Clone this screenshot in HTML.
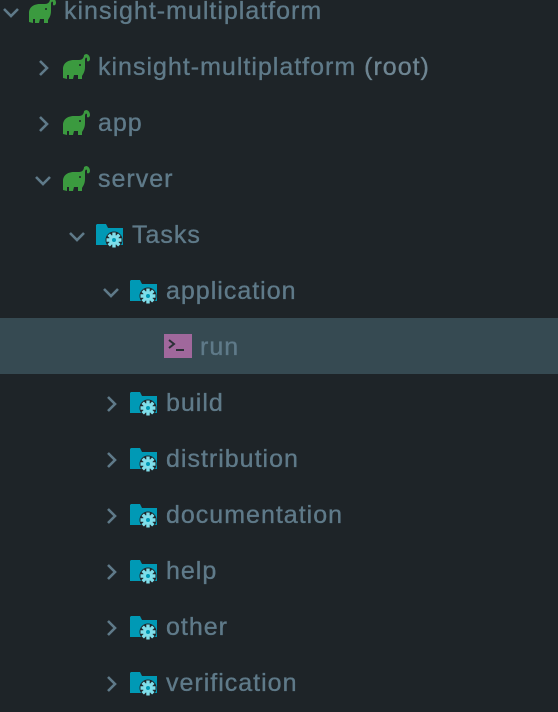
<!DOCTYPE html>
<html><head><style>
body{margin:0;width:558px;height:690px;background:#1e2428;overflow:hidden;position:relative;font-family:"Liberation Sans",sans-serif;}
.r{position:absolute;left:0;width:558px;height:56px;}
.sel{background:#364a52;}
.t{position:absolute;top:13px;font-size:25px;line-height:28px;color:#5f7a89;white-space:nowrap;letter-spacing:1px;-webkit-text-stroke:0.35px #5f7a89}
.t span{color:#6e8592;-webkit-text-stroke:0.35px #6e8592}
svg{position:absolute;overflow:visible}
</style></head><body>
<svg width="0" height="0" style="position:absolute">
<defs>
<g id="chd"><path d="M1 5 L8 12 L15 5" fill="none" stroke="#5f7a89" stroke-width="2.6"/></g>
<g id="chr"><path d="M4 1 L11 8 L4 15" fill="none" stroke="#5f7a89" stroke-width="2.6"/></g>
<g id="ele"><path d="M1 24 L1 15 C1 9 6 6 12 6 L17 6 C20 6 22 4 22 1 L24 0 C26 0 28 2 28 5 C28 7 26 8 25 7 L25 4 C24 3 23 4 23 6 L23 13 C23 18 21 20 20 22 L20 25 L16 25 L16 21 L12 21 L11 25 L7 25 L7 21 L5 21 L5 25 Z" fill="#3b9a3f"/><circle cx="18" cy="11" r="1" fill="#1e2428"/></g>
<g id="fol"><path d="M0 2 L0 22 L27 22 L27 5 L12 5 L10 1 L1 1 Z" fill="#0099b5"/><circle cx="18" cy="17" r="8.5" fill="#1e2428"/><g stroke="#7fdeea" stroke-width="3.4"><path d="M18 9.5 V24.5 M10.5 17 H25.5 M12.7 11.7 L23.3 22.3 M23.3 11.7 L12.7 22.3"/></g><circle cx="18" cy="17" r="5" fill="#7fdeea"/><circle cx="18" cy="17" r="2" fill="#0099b5"/></g>
</defs></svg>

<div class="r" style="top:-16px"><svg style="left:3px;top:20px" width="16" height="16"><use href="#chd"/></svg><svg style="left:28px;top:14px" width="30" height="26"><use href="#ele"/></svg><div class="t" style="left:64px">kinsight-multiplatform</div></div>
<div class="r" style="top:40px"><svg style="left:36px;top:20px" width="16" height="16"><use href="#chr"/></svg><svg style="left:62px;top:14px" width="30" height="26"><use href="#ele"/></svg><div class="t" style="left:98px">kinsight-multiplatform <span>(root)</span></div></div>
<div class="r" style="top:96px"><svg style="left:36px;top:20px" width="16" height="16"><use href="#chr"/></svg><svg style="left:62px;top:14px" width="30" height="26"><use href="#ele"/></svg><div class="t" style="left:98px">app</div></div>
<div class="r" style="top:152px"><svg style="left:35px;top:20px" width="16" height="16"><use href="#chd"/></svg><svg style="left:62px;top:14px" width="30" height="26"><use href="#ele"/></svg><div class="t" style="left:98px">server</div></div>
<div class="r" style="top:208px"><svg style="left:69px;top:20px" width="16" height="16"><use href="#chd"/></svg><svg style="left:96px;top:15px" width="28" height="28"><use href="#fol"/></svg><div class="t" style="left:132px">Tasks</div></div>
<div class="r" style="top:264px"><svg style="left:103px;top:20px" width="16" height="16"><use href="#chd"/></svg><svg style="left:130px;top:15px" width="28" height="28"><use href="#fol"/></svg><div class="t" style="left:166px">application</div></div>
<div class="r sel" style="top:318px"><svg style="left:164px;top:16px" width="28" height="24"><rect x="0" y="0" width="28" height="24" fill="#a0689c"/><path d="M5 6 L10 10 L5 14" fill="none" stroke="#2a3036" stroke-width="2"/><path d="M12 16 H20" stroke="#2a3036" stroke-width="2"/></svg><div class="t" style="left:200px;top:15px">run</div></div>
<div class="r" style="top:376px"><svg style="left:104px;top:20px" width="16" height="16"><use href="#chr"/></svg><svg style="left:130px;top:15px" width="28" height="28"><use href="#fol"/></svg><div class="t" style="left:166px">build</div></div>
<div class="r" style="top:432px"><svg style="left:104px;top:20px" width="16" height="16"><use href="#chr"/></svg><svg style="left:130px;top:15px" width="28" height="28"><use href="#fol"/></svg><div class="t" style="left:166px">distribution</div></div>
<div class="r" style="top:488px"><svg style="left:104px;top:20px" width="16" height="16"><use href="#chr"/></svg><svg style="left:130px;top:15px" width="28" height="28"><use href="#fol"/></svg><div class="t" style="left:166px">documentation</div></div>
<div class="r" style="top:544px"><svg style="left:104px;top:20px" width="16" height="16"><use href="#chr"/></svg><svg style="left:130px;top:15px" width="28" height="28"><use href="#fol"/></svg><div class="t" style="left:166px">help</div></div>
<div class="r" style="top:600px"><svg style="left:104px;top:20px" width="16" height="16"><use href="#chr"/></svg><svg style="left:130px;top:15px" width="28" height="28"><use href="#fol"/></svg><div class="t" style="left:166px">other</div></div>
<div class="r" style="top:656px"><svg style="left:104px;top:20px" width="16" height="16"><use href="#chr"/></svg><svg style="left:130px;top:15px" width="28" height="28"><use href="#fol"/></svg><div class="t" style="left:166px">verification</div></div>
</body></html>
